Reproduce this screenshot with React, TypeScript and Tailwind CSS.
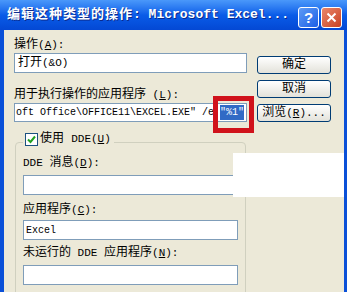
export default function App() {
  return (
    <div className="w-[347px] h-[292px] overflow-hidden flex flex-col bg-[#0a50d8] font-['Liberation_Mono','Noto_Sans_CJK_SC',monospace] text-[12px] text-black">
      {/* title bar */}
      <div className="h-[30px] shrink-0 flex items-center pl-[7px] pr-[5px] bg-gradient-to-b from-[#4a98fa] via-[#0a5ce8] to-[#0448d4] text-white font-bold [text-shadow:1px_1px_0_#0b2a8c]">
        <span className="text-[13px] tracking-[1px] leading-[14px]">编辑这种类型的操作</span>
        <span className="text-[13px] leading-[14px] whitespace-pre">: Microsoft Excel...</span>
        <div className="ml-auto mt-[4px] flex gap-[2px]">
          <div className="w-[21px] h-[21px] rounded-[3px] border border-white bg-gradient-to-br from-[#5d9af5] to-[#1c5ee6] flex items-center justify-center font-['Liberation_Sans',sans-serif] text-[15px] leading-none [text-shadow:none]">
            ?
          </div>
          <div className="w-[21px] h-[21px] rounded-[3px] border border-white bg-gradient-to-br from-[#e9866a] to-[#c9401f] flex items-center justify-center">
            <svg width="11" height="11" viewBox="0 0 11 11">
              <path d="M1.5 1.5 L9.5 9.5 M9.5 1.5 L1.5 9.5" stroke="#fff" strokeWidth="2" />
            </svg>
          </div>
        </div>
      </div>

      {/* dialog body */}
      <div className="relative flex-1 ml-[4px] mr-[3px] bg-[#ece9d8] flex">
        {/* left column */}
        <div className="w-[243px] pl-[10px] pt-[7px] flex flex-col">
          <div className="h-[16px] leading-[16px]">
            操作<span className="text-[11px]">(<u>A</u>):</span>
          </div>
          <div className="h-[20px] border border-[#7f9db9] bg-white flex items-center px-[3px]">
            打开 <span className="text-[11px]">(&amp;O)</span>
          </div>

          <div className="mt-[14px] h-[16px] leading-[16px]">
            用于执行操作的应用程序<span className="text-[11px]"> (<u>L</u>):</span>
          </div>
          <div className="h-[19px] border border-[#7f9db9] bg-white flex items-center pl-[1px] overflow-hidden whitespace-pre text-[10px]">
            {'oft Office\\OFFICE11\\EXCEL.EXE" /e '}
            <span className="bg-[#316ac5] text-white">"%1"</span>
          </div>

          {/* group box with checkbox legend */}
          <div className="relative z-10 mt-[9px] h-[16px] flex">
            <div className="ml-[9px] pl-[2px] pr-[3px] bg-[#ece9d8] flex items-center gap-[2px]">
              <div className="w-[13px] h-[13px] border border-[#1c5180] bg-white flex items-center justify-center">
                <svg width="11" height="11" viewBox="0 0 11 11">
                  <path d="M2 5.5 L4.5 8 L9 2.5" fill="none" stroke="#21a121" strokeWidth="2" />
                </svg>
              </div>
              <span className="leading-[16px]">
                使用 <span className="text-[11px]">DDE(<u>U</u>)</span>
              </span>
            </div>
          </div>
          <div className="-mt-[5px] ml-[1px] w-[231px] h-[200px] shrink-0 border border-[#d0d0bf] rounded-[4px] pt-[12px] pl-[7px] flex flex-col">
            <div className="h-[16px] leading-[16px]">
              <span className="text-[11px]">DDE </span>消息<span className="text-[11px]">(<u>D</u>):</span>
            </div>
            <div className="mt-[4px] w-[215px] h-[20px] border border-[#7f9db9] bg-white" />

            <div className="mt-[7px] h-[16px] leading-[16px]">
              应用程序<span className="text-[11px]">(<u>C</u>):</span>
            </div>
            <div className="mt-[2px] w-[215px] h-[20px] border border-[#7f9db9] bg-white flex items-center px-[2px] text-[10px]">
              Excel
            </div>

            <div className="mt-[5px] h-[16px] leading-[16px]">
              未运行的<span className="text-[11px]"> DDE </span>应用程序<span className="text-[11px]">(<u>N</u>):</span>
            </div>
            <div className="mt-[4px] w-[215px] h-[20px] border border-[#7f9db9] bg-white" />
          </div>
        </div>

        {/* right column buttons */}
        <div className="ml-[10px] w-[74px] pt-[26px] flex flex-col gap-[6px]">
          <div className="h-[18px] border border-[#003c74] rounded-[3px] bg-gradient-to-b from-white to-[#e3e2da] flex items-center justify-center">
            确定
          </div>
          <div className="h-[18px] border border-[#003c74] rounded-[3px] bg-gradient-to-b from-white to-[#e3e2da] flex items-center justify-center">
            取消
          </div>
          <div className="h-[18px] border border-[#003c74] rounded-[3px] bg-gradient-to-b from-white to-[#e3e2da] flex items-center justify-center">
            浏览<span className="text-[11px]">(<u>R</u>)...</span>
          </div>
        </div>

        {/* red highlight box drawn over the screenshot */}
        <div className="absolute left-[209px] top-[66px] w-[41px] h-[37px] border-[5px] border-[#d0121b]" />
        {/* white patch covering part of the dialog */}
        <div className="absolute left-[229px] top-[123px] w-[111px] h-[44px] bg-white" />
      </div>
    </div>
  );
}
